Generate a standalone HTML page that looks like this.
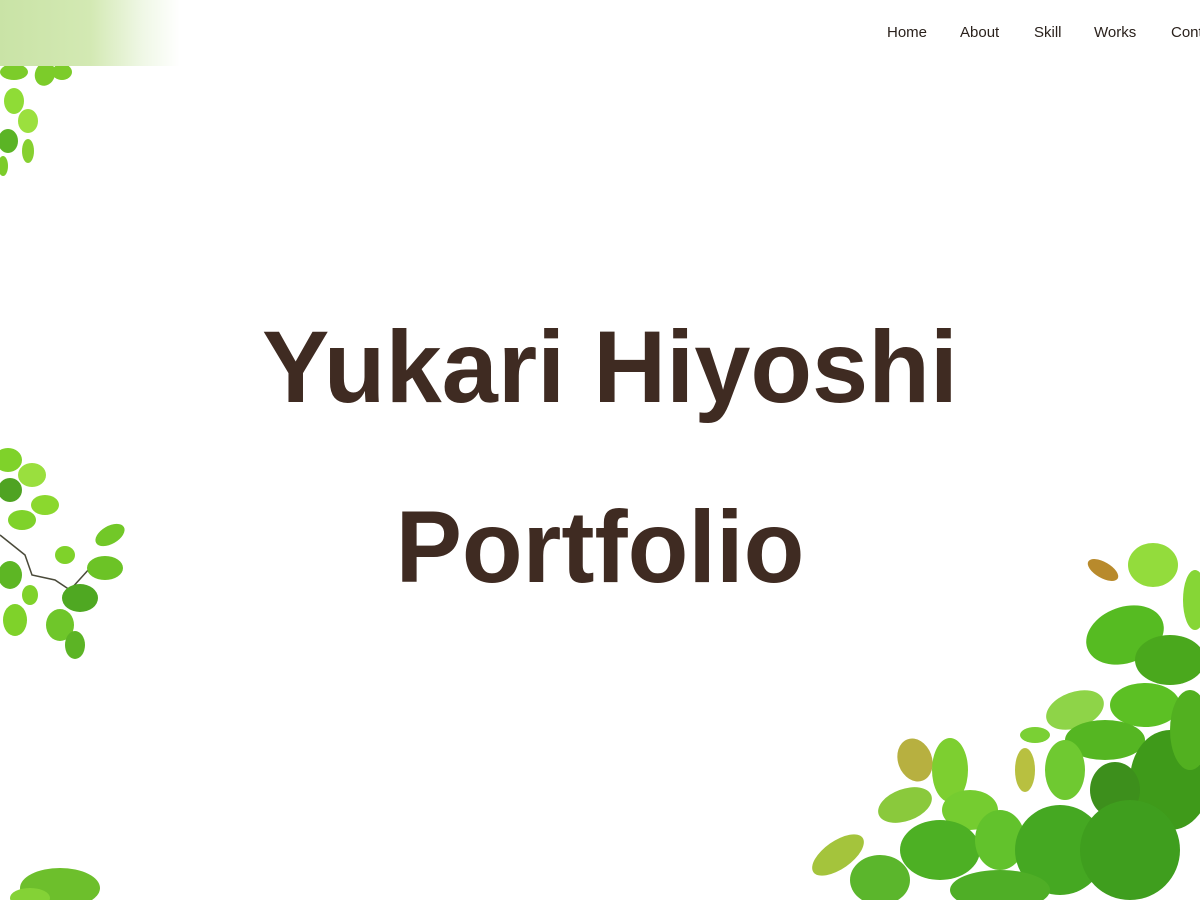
<!DOCTYPE html>
<html><head><meta charset="utf-8"><style>
html,body{margin:0;padding:0;background:#fff;width:1200px;height:900px;overflow:hidden;position:relative;font-family:"Liberation Sans",sans-serif}
.topband{position:absolute;left:0;top:0;width:180px;height:66px;background:linear-gradient(90deg,#c9e3a6 0%,#d3e9b3 50%,rgba(230,243,215,0.6) 80%,rgba(255,255,255,0) 100%)}
nav a{position:absolute;top:24px;font-size:15px;color:#2a211c;text-decoration:none;white-space:nowrap}
h1{position:absolute;left:0;width:1200px;margin:0;text-align:center;font-weight:bold;color:#3f2b22;font-size:102px;line-height:1}
svg{position:absolute}
</style></head><body>
<div class="topband"></div>
<nav><a style="left:887px">Home</a><a style="left:960px">About</a><a style="left:1034px">Skill</a><a style="left:1094px">Works</a><a style="left:1171px">Contact</a></nav>
<h1 style="top:316px;left:10px;transform:scaleX(0.99)">Yukari Hiyoshi</h1>
<h1 style="top:496px;transform:scaleX(0.975)">Portfolio</h1>

<svg style="left:0;top:66px" width="80" height="120">
<g fill="#7ccc2a">
<ellipse cx="14" cy="6" rx="14" ry="8"/><ellipse cx="45" cy="8" rx="10" ry="12" transform="rotate(20 45 8)"/>
<ellipse cx="62" cy="6" rx="10" ry="8"/><ellipse cx="14" cy="35" rx="10" ry="13" fill="#8fdc36"/>
<ellipse cx="28" cy="55" rx="10" ry="12" fill="#9be03e"/><ellipse cx="8" cy="75" rx="10" ry="12" fill="#5bb425"/>
<ellipse cx="28" cy="85" rx="6" ry="12" fill="#86d030"/><ellipse cx="3" cy="100" rx="5" ry="10"/></g>
</svg>

<svg style="left:0;top:440px" width="140" height="230">
<path d="M0 95 L25 115 L32 135 L55 140 L70 150 L90 128" stroke="#4a4a3a" stroke-width="1.5" fill="none"/>
<g fill="#7fd22a">
<ellipse cx="8" cy="20" rx="14" ry="12"/><ellipse cx="32" cy="35" rx="14" ry="12" fill="#9adf3e"/>
<ellipse cx="10" cy="50" rx="12" ry="12" fill="#4fa322"/><ellipse cx="45" cy="65" rx="14" ry="10" fill="#8bd82e"/>
<ellipse cx="22" cy="80" rx="14" ry="10"/><ellipse cx="110" cy="95" rx="16" ry="9" fill="#72c828" transform="rotate(-30 110 95)"/>
<ellipse cx="105" cy="128" rx="18" ry="12" fill="#6cc326"/><ellipse cx="65" cy="115" rx="10" ry="9"/>
<ellipse cx="10" cy="135" rx="12" ry="14" fill="#5db624"/><ellipse cx="80" cy="158" rx="18" ry="14" fill="#4fa822"/>
<ellipse cx="60" cy="185" rx="14" ry="16" fill="#6fc62a"/><ellipse cx="75" cy="205" rx="10" ry="14" fill="#5cb425"/>
<ellipse cx="15" cy="180" rx="12" ry="16" fill="#7fd22a"/><ellipse cx="30" cy="155" rx="8" ry="10"/></g>
</svg>

<svg style="left:0;top:850px" width="110" height="50">
<ellipse cx="60" cy="38" rx="40" ry="20" fill="#6dbf2c"/><ellipse cx="30" cy="48" rx="20" ry="10" fill="#84d236"/>
</svg>

<svg style="left:800px;top:530px" width="400" height="370">
<g>
<ellipse cx="303" cy="40" rx="17" ry="8" fill="#b88a2c" transform="rotate(30 303 40)"/>
<ellipse cx="353" cy="35" rx="25" ry="22" fill="#93dc3c"/>
<ellipse cx="395" cy="70" rx="12" ry="30" fill="#86d636"/>
<ellipse cx="325" cy="105" rx="40" ry="28" fill="#56bb22" transform="rotate(-20 325 105)"/>
<ellipse cx="370" cy="130" rx="35" ry="25" fill="#4aa81d"/>
<ellipse cx="345" cy="175" rx="35" ry="22" fill="#5cc024"/>
<ellipse cx="275" cy="180" rx="30" ry="18" fill="#8ed448" transform="rotate(-20 275 180)"/>
<ellipse cx="305" cy="210" rx="40" ry="20" fill="#55b622"/>
<ellipse cx="265" cy="240" rx="20" ry="30" fill="#6fc931"/>
<ellipse cx="235" cy="205" rx="15" ry="8" fill="#7ad034"/>
<ellipse cx="225" cy="240" rx="10" ry="22" fill="#b8c040"/>
<ellipse cx="370" cy="250" rx="40" ry="50" fill="#3f9a1a"/>
<ellipse cx="315" cy="260" rx="25" ry="28" fill="#3d8f1c"/>
<ellipse cx="390" cy="200" rx="20" ry="40" fill="#52b020"/>
<ellipse cx="115" cy="230" rx="17" ry="22" fill="#b7b040" transform="rotate(-20 115 230)"/>
<ellipse cx="150" cy="240" rx="18" ry="32" fill="#7dcf30"/>
<ellipse cx="105" cy="275" rx="28" ry="16" fill="#8ac93c" transform="rotate(-20 105 275)"/>
<ellipse cx="170" cy="280" rx="28" ry="20" fill="#75cc30"/>
<ellipse cx="140" cy="320" rx="40" ry="30" fill="#4db024"/>
<ellipse cx="200" cy="310" rx="25" ry="30" fill="#62c22c"/>
<ellipse cx="260" cy="320" rx="45" ry="45" fill="#45a822"/>
<ellipse cx="330" cy="320" rx="50" ry="50" fill="#3f9e1e"/>
<ellipse cx="38" cy="325" rx="30" ry="14" fill="#a4c43c" transform="rotate(-35 38 325)"/>
<ellipse cx="80" cy="350" rx="30" ry="25" fill="#5bb62c"/>
<ellipse cx="200" cy="360" rx="50" ry="20" fill="#4fae26"/>
</g>
</svg>
</body></html>
